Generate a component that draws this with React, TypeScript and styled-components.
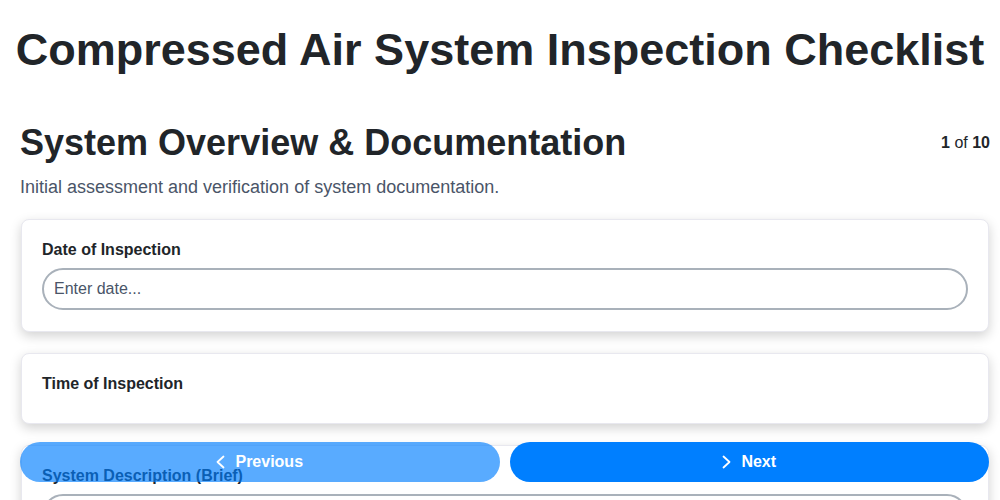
import React from 'react';
import styled, { createGlobalStyle } from 'styled-components';

const GlobalStyle = createGlobalStyle`
    html, body {
        margin: 0;
        padding: 0;
        background: #ffffff;
        font-family: "Liberation Sans", Arial, sans-serif;
        color: #212529;
    }
    * {
        box-sizing: border-box;
    }
`;

const Page = styled.div`
    padding-bottom: 80px;
`;

const Title = styled.h1`
    font-size: 45px;
    font-weight: 700;
    text-align: center;
    margin: 0;
    padding: 25px 0 47px;
    line-height: 50px;
    color: #212529;
`;

const Content = styled.div`
    padding: 0 10px 0 20px;
`;

const SectionHeader = styled.div`
    display: flex;
    justify-content: space-between;
    align-items: center;
`;

const SectionTitle = styled.h2`
    font-size: 36px;
    font-weight: 700;
    margin: 0;
    line-height: 42px;
    color: #212529;
`;

const Progress = styled.div`
    font-size: 16px;
    color: #212529;
    b {
        font-weight: 700;
    }
`;

const SectionDescription = styled.p`
    font-size: 18px;
    color: #4a5568;
    margin: 12px 0 21px;
    line-height: 22px;
`;

const QuestionList = styled.div`
    display: flex;
    flex-direction: column;
    gap: 21px;
    padding-right: 1px;
    padding-left: 1px;
`;

const Card = styled.div`
    background: #ffffff;
    border: 1px solid #e8e8ef;
    border-radius: 8px;
    box-shadow: 0 4px 12px rgba(0, 0, 0, 0.18);
    padding: 20px 20px 21px;
`;

const Label = styled.label`
    display: block;
    font-size: 16px;
    font-weight: 700;
    line-height: 19px;
    margin-bottom: 9px;
    color: #212529;
`;

const TextInput = styled.input`
    display: block;
    width: 100%;
    height: 42px;
    border: 2px solid #a9b1ba;
    border-radius: 21px;
    padding: 0 10px;
    font-size: 16px;
    font-family: "Liberation Sans", Arial, sans-serif;
    color: #212529;
    background: #ffffff;
    outline: none;
    &::placeholder {
        color: #4a5568;
    }
`;

const NavBar = styled.div`
    position: fixed;
    left: 20px;
    right: 11px;
    bottom: 18px;
    display: flex;
    gap: 10px;
`;

const NavButton = styled.button<{ $disabled?: boolean }>`
    flex: 1;
    height: 40px;
    border: none;
    border-radius: 20px;
    background: #007fff;
    color: #ffffff;
    font-family: "Liberation Sans", Arial, sans-serif;
    font-size: 16px;
    font-weight: 700;
    display: flex;
    align-items: center;
    justify-content: center;
    gap: 10px;
    cursor: ${(p) => (p.$disabled ? 'default' : 'pointer')};
    opacity: ${(p) => (p.$disabled ? 0.65 : 1)};
`;

const ChevronSvg = styled.svg`
    width: 9px;
    height: 14px;
    flex-shrink: 0;
`;

const Chevron = ({ dir }: { dir: 'left' | 'right' }) => (
    <ChevronSvg viewBox="0 0 9 14" fill="none" stroke="currentColor" strokeWidth={1.8} strokeLinecap="round" strokeLinejoin="round">
        {dir === 'left' ? <polyline points="7.5,1.5 1.5,7 7.5,12.5" /> : <polyline points="1.5,1.5 7.5,7 1.5,12.5" />}
    </ChevronSvg>
);

const questions = [
    { label: 'Date of Inspection', placeholder: 'Enter date...', input: true },
    { label: 'Time of Inspection', placeholder: '', input: false },
    { label: 'System Description (Brief)', placeholder: 'Enter description...', input: true },
];

const App = () => {
    return (
        <Page>
            <GlobalStyle />
            <Title>Compressed Air System Inspection Checklist</Title>
            <Content>
                <SectionHeader>
                    <SectionTitle>System Overview &amp; Documentation</SectionTitle>
                    <Progress>
                        <b>1</b> of <b>10</b>
                    </Progress>
                </SectionHeader>
                <SectionDescription>
                    Initial assessment and verification of system documentation.
                </SectionDescription>
                <QuestionList>
                    {questions.map((q) => (
                        <Card key={q.label}>
                            <Label>{q.label}</Label>
                            {q.input && <TextInput placeholder={q.placeholder} />}
                        </Card>
                    ))}
                </QuestionList>
            </Content>
            <NavBar>
                <NavButton $disabled>
                    <Chevron dir="left" />
                    Previous
                </NavButton>
                <NavButton>
                    <Chevron dir="right" />
                    Next
                </NavButton>
            </NavBar>
        </Page>
    );
};

export default App;
